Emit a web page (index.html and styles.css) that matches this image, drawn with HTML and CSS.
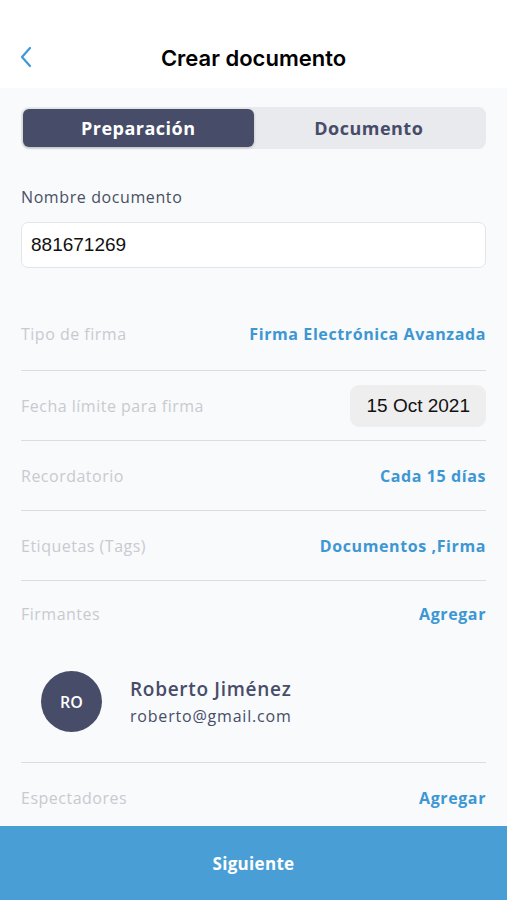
FILE: index.html
```html
<!DOCTYPE html>
<html lang="es">
<head>
  <meta charset="UTF-8" />
  <meta name="viewport" content="width=device-width, initial-scale=1.0"/>
  <title>Crear documento</title>
  <link rel="stylesheet" href="styles.css">
</head>
<body>
  <header class="topbar">
    <button class="back" aria-label="Volver">
      <svg width="14" height="22" viewBox="0 0 14 22"><path d="M11 2 L3 11 L11 20" fill="none" stroke="#3d9ad6" stroke-width="2.2" stroke-linecap="round" stroke-linejoin="round"/></svg>
    </button>
    <h1>Crear documento</h1>
  </header>

  <main class="content">
    <div class="tabs">
      <div class="tab active">Preparación</div>
      <div class="tab">Documento</div>
    </div>

    <label class="field-label" for="nombre">Nombre documento</label>
    <input class="field" id="nombre" type="text" value="881671269">

    <div class="row">
      <span class="row-label">Tipo de firma</span>
      <span class="row-value">Firma Electrónica Avanzada</span>
    </div>
    <div class="row">
      <span class="row-label">Fecha límite para firma</span>
      <span class="date-pill">15 Oct 2021</span>
    </div>
    <div class="row">
      <span class="row-label">Recordatorio</span>
      <span class="row-value">Cada 15 días</span>
    </div>
    <div class="row">
      <span class="row-label">Etiquetas (Tags)</span>
      <span class="row-value">Documentos ,Firma</span>
    </div>
    <div class="row no-line short">
      <span class="row-label">Firmantes</span>
      <span class="row-value">Agregar</span>
    </div>

    <div class="signer">
      <div class="avatar">RO</div>
      <div class="signer-info">
        <div class="signer-name">Roberto Jiménez</div>
        <div class="signer-mail">roberto@gmail.com</div>
      </div>
    </div>

    <div class="row no-line">
      <span class="row-label">Espectadores</span>
      <span class="row-value">Agregar</span>
    </div>
  </main>

  <footer class="next">Siguiente</footer>
</body>
</html>
```

FILE: styles.css
```css
body {
  margin: 0;
  font-family: 'Open Sans', sans-serif;
  background: #f8fafc;
  color: #474d68;
  height: 900px;
  overflow: hidden;
}

.topbar {
  background: #ffffff;
  height: 88px;
  display: flex;
  align-items: flex-end;
  justify-content: center;
  position: relative;
}

.topbar h1 {
  margin: 0 0 17px;
  font-family: 'Inter', sans-serif;
  font-size: 22px;
  font-weight: 600;
  color: #000000;
}

.back {
  position: absolute;
  left: 19px;
  top: 46px;
  background: none;
  border: none;
  padding: 0;
}

.content {
  padding: 19px 21px 0;
}

.tabs {
  display: flex;
  background: #e9eaee;
  border-radius: 8px;
  padding: 2px;
  height: 38px;
}

.tab {
  flex: 1;
  display: flex;
  align-items: center;
  justify-content: center;
  font-size: 18px;
  font-weight: 700;
  letter-spacing: 0.5px;
  color: #474d68;
  border-radius: 6px;
}

.tab.active {
  background: #474d68;
  color: #ffffff;
  box-shadow: 0 1px 3px rgba(0, 0, 0, 0.2);
}

.field-label {
  display: block;
  margin-top: 37px;
  font-size: 16px;
  letter-spacing: 0.6px;
  color: #4a4f63;
}

.field {
  display: block;
  box-sizing: border-box;
  width: 100%;
  height: 46px;
  margin-top: 14px;
  padding: 0 9px;
  border: 1px solid #e3e5e8;
  border-radius: 7px;
  background: #ffffff;
  font-family: 'Liberation Sans', sans-serif;
  font-size: 19px;
  color: #111111;
  outline: none;
}

.row {
  box-sizing: border-box;
  display: flex;
  align-items: center;
  justify-content: space-between;
  height: 70px;
  border-bottom: 1px solid #dcdde1;
}

.field + .row {
  margin-top: 33px;
  padding-bottom: 4px;
}

.row.no-line {
  border-bottom: none;
}

.row.short {
  height: 66px;
}

.row-label {
  font-size: 16px;
  letter-spacing: 0.5px;
  color: #c8cacf;
}

.row-value {
  font-size: 16px;
  font-weight: 700;
  letter-spacing: 0.6px;
  color: #3d97d3;
}

.date-pill {
  background: #eeeeef;
  border-radius: 9px;
  padding: 0 16px;
  height: 42px;
  display: flex;
  align-items: center;
  font-family: 'Liberation Sans', sans-serif;
  font-size: 19px;
  color: #111111;
}

.signer {
  display: flex;
  align-items: center;
  gap: 28px;
  padding: 24px 0 30px 20px;
  border-bottom: 1px solid #dcdde1;
}

.avatar {
  width: 61px;
  height: 61px;
  border-radius: 50%;
  background: #474d68;
  color: #ffffff;
  font-size: 16px;
  font-weight: 600;
  display: flex;
  align-items: center;
  justify-content: center;
}

.signer-name {
  font-size: 19px;
  font-weight: 600;
  letter-spacing: 0.7px;
  color: #474d68;
}

.signer-mail {
  margin-top: 3px;
  font-size: 16px;
  letter-spacing: 0.8px;
  color: #474d68;
}

.next {
  position: fixed;
  left: 0;
  right: 0;
  bottom: 0;
  height: 74px;
  background: #4a9ed6;
  color: #ffffff;
  font-size: 17px;
  font-weight: 700;
  letter-spacing: 0.3px;
  display: flex;
  align-items: center;
  justify-content: center;
}
```
